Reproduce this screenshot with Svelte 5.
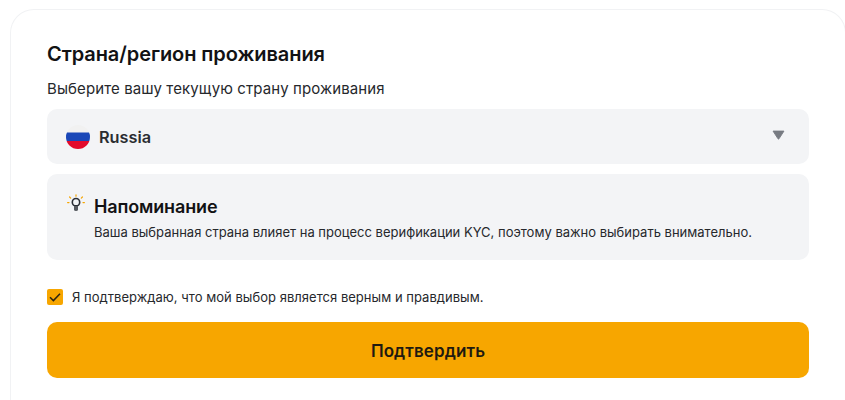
<script>
  let checked = $state(true);
</script>

<div class="card">
  <h1>Страна/регион проживания</h1>
  <p class="sub">Выберите вашу текущую страну проживания</p>
  <div class="select">
    <svg class="flag" viewBox="0 0 24 24" width="24" height="24" aria-hidden="true">
      <defs><clipPath id="c"><circle cx="12" cy="12" r="12" /></clipPath></defs>
      <g clip-path="url(#c)">
        <rect width="24" height="8" fill="#f1f1f1" />
        <rect y="7.5" width="24" height="8.5" fill="#1a47b8" />
        <rect y="16" width="24" height="8" fill="#e30a2c" />
      </g>
    </svg>
    <span class="value">Russia</span>
    <svg class="caret" viewBox="0 0 14 11" width="13" height="10" aria-hidden="true">
      <path d="M1 1.2 H13 L7.6 9.6 Q7 10.4 6.4 9.6 Z" fill="#777b82" stroke="#777b82" stroke-linejoin="round" />
    </svg>
  </div>
  <div class="note">
    <svg class="bulb" viewBox="0 0 20 20" width="20" height="20" aria-hidden="true">
      <g stroke="#f7a600" stroke-width="1.2" stroke-linecap="round">
        <path d="M10 .8V2.2M3.6 3 4.7 4.1M16.4 3 15.3 4.1M1.6 8.6H3M17 8.6H18.4" />
      </g>
      <circle cx="10" cy="8.2" r="3.7" fill="none" stroke="#2b2f36" stroke-width="1.6" />
      <path d="M8 12H12V15.4Q12 17 10 17Q8 17 8 15.4Z" fill="#55585e" />
    </svg>
    <div>
      <h2>Напоминание</h2>
      <p>Ваша выбранная страна влияет на процесс верификации KYC, поэтому важно выбирать внимательно.</p>
    </div>
  </div>
  <label class="confirm">
    <input type="checkbox" bind:checked />
    <span class="box">
      {#if checked}
        <svg viewBox="0 0 16 16" width="16" height="16" aria-hidden="true">
          <path d="M3 8.2 6.4 11.6 13 4.8" fill="none" stroke="#2b2412" stroke-width="1.5" />
        </svg>
      {/if}
    </span>
    <span class="confirm-text">Я подтверждаю, что мой выбор является верным и правдивым.</span>
  </label>
  <button type="button">Подтвердить</button>
</div>

<style>
  :global(body) {
    margin: 0;
    background: #fff;
    overflow: hidden;
  }
  .card {
    box-sizing: border-box;
    width: 836px;
    height: 400px;
    margin: 9px 0 0 10px;
    padding: 32px 36px 0;
    border: 1px solid #f1f2f4;
    border-bottom: 0;
    border-radius: 24px 24px 0 0;
    font-family: Inter, sans-serif;
    color: #121214;
  }
  h1 {
    margin: 0;
    font-size: 20px;
    line-height: 24px;
    font-weight: 600;
    letter-spacing: -.08px;
  }
  .sub {
    margin: 12px 0 0;
    font-size: 15px;
    line-height: 22px;
    letter-spacing: .1px;
    color: #26282c;
  }
  .select {
    display: flex;
    align-items: center;
    gap: 9px;
    height: 55px;
    margin: 9px 0 0;
    padding: 0 24px 0 19px;
    border-radius: 10px;
    background: #f3f4f6;
  }
  .flag { flex: none; }
  .value {
    flex: 1;
    font-size: 16.3px;
    font-weight: 600;
    color: #2a2c31;
  }
  .caret { margin-top: -4px; }
  .note {
    display: flex;
    gap: 8px;
    height: 86px;
    box-sizing: border-box;
    margin-top: 10px;
    padding: 20px 19px 0 19px;
    border-radius: 10px;
    background: #f3f4f6;
  }
  .bulb { flex: none; }
  h2 {
    margin: 0;
    font-size: 18px;
    line-height: 26px;
    font-weight: 600;
    letter-spacing: -.15px;
  }
  .note p {
    margin: 3px 0 0;
    font-size: 13px;
    line-height: 18px;
    color: #26282c;
  }
  .confirm {
    display: flex;
    align-items: center;
    gap: 9px;
    margin-top: 29px;
    height: 16px;
    font-size: 13px;
    line-height: 16px;
    color: #26282c;
  }
  .confirm-text { letter-spacing: .03px; }
  input {
    position: absolute;
    opacity: 0;
    width: 0;
    height: 0;
  }
  .box {
    flex: none;
    display: block;
    width: 16px;
    height: 16px;
    border-radius: 2px;
    background: #f7a600;
  }
  .box svg { display: block; }
  button {
    display: block;
    width: 100%;
    height: 56px;
    margin-top: 17px;
    padding: 2px 0 0;
    border: 0;
    border-radius: 10px;
    background: #f7a600;
    font: 600 17px Inter, sans-serif;
    letter-spacing: .1px;
    color: #1f1a10;
  }
</style>
